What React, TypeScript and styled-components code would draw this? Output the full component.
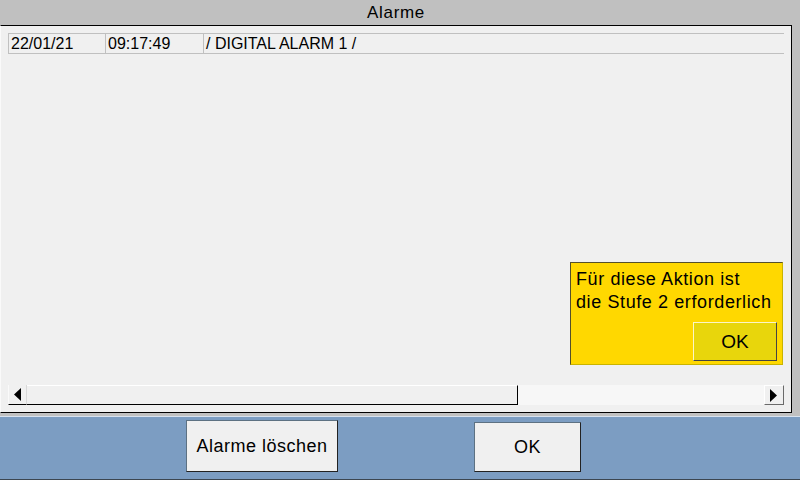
import React from 'react';
import styled, { createGlobalStyle } from 'styled-components';

const GlobalStyle = createGlobalStyle`
  html, body {
    margin: 0;
    padding: 0;
    background: #c0c0c0;
  }
  body {
    font-family: "Liberation Sans", Arial, sans-serif;
    color: #000;
  }
`;

const Screen = styled.div`
  width: 800px;
  height: 480px;
  display: flex;
  flex-direction: column;
  background: #c0c0c0;
  overflow: hidden;
`;

const TitleBar = styled.div`
  height: 25px;
  line-height: 25px;
  padding-right: 8px;
  text-align: center;
  font-size: 17px;
  letter-spacing: 0.7px;
  background: #c0c0c0;
`;

const Middle = styled.div`
  display: flex;
  height: 391px;
  padding-right: 8px;
`;

const Panel = styled.div`
  position: relative;
  box-sizing: border-box;
  width: 792px;
  height: 388px;
  display: flex;
  flex-direction: column;
  padding: 7px 7px 7px 7px;
  background: #f0f0f0;
  border-top: 1px solid #000;
  border-right: 1px solid #000;
  border-bottom: 1px solid #000;
  border-left: 1px solid #fafafa;
`;

const AlarmRow = styled.div`
  display: flex;
  height: 19px;
  border-top: 1px solid #c0c0c0;
  border-bottom: 1px solid #c0c0c0;
  font-size: 16px;
  line-height: 19px;
  white-space: nowrap;
`;

const Cell = styled.div<{ $width?: number }>`
  box-sizing: border-box;
  ${p => (p.$width ? `width: ${p.$width}px;` : 'flex: 1;')}
  padding-left: 2px;
  border-left: 1px solid #c0c0c0;
`;

const Spacer = styled.div`
  flex: 1;
`;

const ScrollBar = styled.div`
  display: flex;
  height: 20px;
`;

const ArrowButton = styled.div<{ $side: 'left' | 'right' }>`
  box-sizing: border-box;
  width: ${p => (p.$side === 'left' ? 19 : 20)}px;
  display: flex;
  align-items: center;
  justify-content: center;
  background: #f0f0f0;
  ${p =>
    p.$side === 'left'
      ? `
    border-left: 1px solid #fafafa;
    border-bottom: 1px solid #000;
    border-right: 1px solid #d8d8d8;
  `
      : `
    border-top: 1px solid #fff;
    border-left: 1px solid #fff;
    border-right: 1px solid #6a6a6a;
    border-bottom: 1px solid #6a6a6a;
  `}
`;

const Thumb = styled.div`
  box-sizing: border-box;
  width: 491px;
  background: #f0f0f0;
  border-top: 1px solid #fff;
  border-bottom: 1px solid #000;
  border-right: 1px solid #000;
`;

const Track = styled.div`
  flex: 1;
  background: #f7f7f7;
`;

const Notice = styled.div`
  position: absolute;
  left: 569px;
  top: 236px;
  box-sizing: border-box;
  width: 213px;
  height: 103px;
  padding: 5px 5px 3px 5px;
  display: flex;
  flex-direction: column;
  align-items: flex-end;
  background: #ffd800;
  border-top: 1px solid #55502a;
  border-left: 1px solid #55502a;
  border-right: 1px solid #c9b400;
  border-bottom: 1px solid #c9b400;
`;

const NoticeText = styled.div`
  align-self: stretch;
  font-size: 18px;
  line-height: 23px;
  letter-spacing: 0.6px;
  white-space: nowrap;
`;

const NoticeButton = styled.div`
  box-sizing: border-box;
  margin-top: auto;
  width: 84px;
  height: 39px;
  display: flex;
  align-items: center;
  justify-content: center;
  font-size: 19px;
  background: #e8d60c;
  border-top: 1px solid #fbf6c8;
  border-left: 1px solid #fbf6c8;
  border-right: 1px solid #444;
  border-bottom: 1px solid #444;
`;

const BottomBar = styled.div`
  box-sizing: border-box;
  height: 64px;
  display: flex;
  align-items: flex-end;
  gap: 136px;
  padding: 0 0 7px 186px;
  background: #7c9dc2;
  border-top: 1px solid #d8e2ee;
  border-bottom: 1px solid #3c4650;
`;

const ActionButton = styled.button<{ $width: number; $height: number }>`
  box-sizing: border-box;
  width: ${p => p.$width}px;
  height: ${p => p.$height}px;
  padding: 0;
  font-family: "Liberation Sans", Arial, sans-serif;
  font-size: 18px;
  letter-spacing: 0.5px;
  color: #000;
  background: #f0f0f0;
  border-top: 1px solid #5d7182;
  border-left: 1px solid #5d7182;
  border-right: 1px solid #222;
  border-bottom: 1px solid #222;
  border-radius: 0;
`;

const Arrow: React.FC<{ dir: 'left' | 'right' }> = ({ dir }) => (
  <svg width="8" height="13" viewBox="0 0 8 13">
    {dir === 'left' ? (
      <polygon points="7,0 7,13 0,6.5" fill="#000" />
    ) : (
      <polygon points="0,0 0,13 7,6.5" fill="#000" />
    )}
  </svg>
);

const App: React.FC = () => {
  return (
    <>
      <GlobalStyle />
      <Screen>
        <TitleBar>Alarme</TitleBar>
        <Middle>
          <Panel>
            <AlarmRow>
              <Cell $width={97}>22/01/21</Cell>
              <Cell $width={98}>09:17:49</Cell>
              <Cell>/ DIGITAL ALARM 1 /</Cell>
            </AlarmRow>
            <Spacer />
            <ScrollBar>
              <ArrowButton $side="left">
                <Arrow dir="left" />
              </ArrowButton>
              <Thumb />
              <Track />
              <ArrowButton $side="right">
                <Arrow dir="right" />
              </ArrowButton>
            </ScrollBar>
            <Notice>
              <NoticeText>
                Für diese Aktion ist
                <br />
                die Stufe 2 erforderlich
              </NoticeText>
              <NoticeButton>OK</NoticeButton>
            </Notice>
          </Panel>
        </Middle>
        <BottomBar>
          <ActionButton $width={152} $height={52}>Alarme löschen</ActionButton>
          <ActionButton $width={107} $height={50}>OK</ActionButton>
        </BottomBar>
      </Screen>
    </>
  );
};

export default App;
